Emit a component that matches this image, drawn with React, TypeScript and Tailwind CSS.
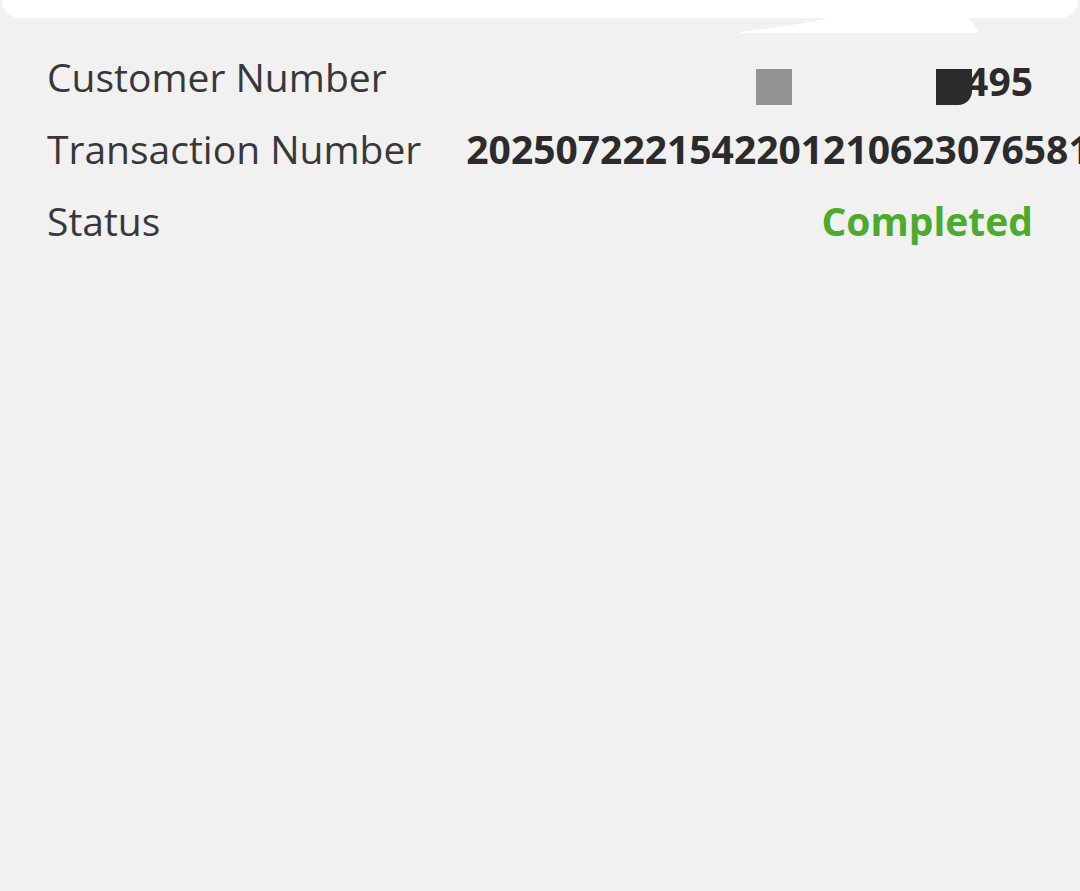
import React from "react";

export default function App() {
  return (
    <div className="relative w-[1080px] h-[891px] overflow-hidden bg-[#f1f1f1]" style={{ fontFamily: '"Open Sans", sans-serif' }}>
      <div className="mx-[2px] h-[18px] rounded-b-[18px] bg-white" />
      <svg className="absolute left-[740px] top-[14px]" width="242" height="20" viewBox="0 0 242 20">
        <polygon points="0,18 60,10 90,4 95,0 225,0 235,12 238,18 236,19 0,19" fill="#ffffff" />
      </svg>
      <div className="flex flex-col pl-[47px] pr-[47px] pt-[31px]">
        <div className="flex h-[72px] items-start justify-between">
          <span className="text-[39px] leading-[56px] text-[#383838]">Customer Number</span>
          <div className="flex items-start pt-[20px]">
            <div className="h-[36px] w-[36px] bg-[#939393]" />
            <div className="w-[174px]" />
            <span className="relative -mt-[10px] text-[39px] font-bold leading-[44px] text-[#2b2b2b]">
              495
              <span className="absolute left-[-30px] top-[10px] h-[36px] w-[36px] rounded-br-[14px] bg-[#2b2b2b]" />
            </span>
          </div>
        </div>
        <div className="flex h-[72px] items-start gap-[45px] whitespace-nowrap">
          <span className="text-[39px] leading-[56px] text-[#383838]">Transaction Number</span>
          <span className="text-[39px] font-bold leading-[56px] text-[#2b2b2b]">20250722215422012106230765810</span>
        </div>
        <div className="flex h-[72px] items-start justify-between">
          <span className="text-[39px] leading-[56px] text-[#383838]">Status</span>
          <span className="text-[39px] font-bold leading-[56px] text-[#4caa2c]">Completed</span>
        </div>
      </div>
    </div>
  );
}
